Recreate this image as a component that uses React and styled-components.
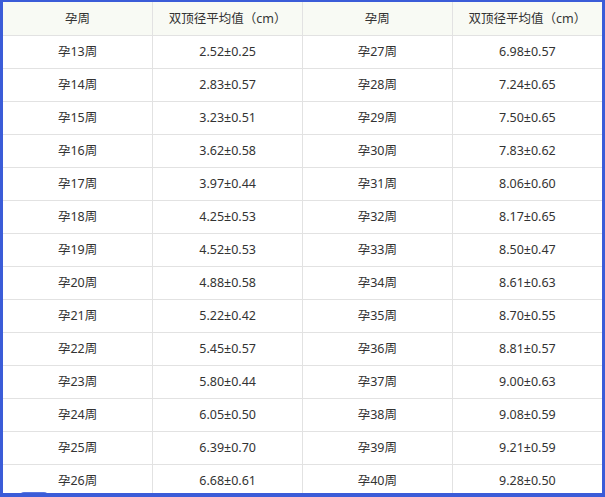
import React from "react";
import styled, { createGlobalStyle } from "styled-components";

const Global = createGlobalStyle`
  html, body { margin: 0; padding: 0; background: #ffffff; }
  * { box-sizing: border-box; }
`;

const Frame = styled.div`
  width: 605px;
  height: 497px;
  overflow: hidden;
  border-style: solid;
  border-color: #3b5cd8;
  border-width: 2px 3px 4px 3px;
  background: #ffffff;
  position: relative;
`;

const Table = styled.table`
  width: 599px;
  border-collapse: collapse;
  table-layout: fixed;
  font-family: "Noto Sans", "Noto Sans CJK SC", sans-serif;
  font-size: 12.5px;
  line-height: 1.2;
  color: #333333;
`;

const HeadCell = styled.th`
  height: 33px;
  padding: 0;
  font-weight: 400;
  text-align: center;
  vertical-align: middle;
  background: #f8faf4;
  border-right: 1px solid #e2e2e2;
  border-bottom: 1px solid #e2e2e2;
  &:last-child { border-right: none; }
`;

const Cell = styled.td`
  height: 33px;
  padding: 0;
  text-align: center;
  vertical-align: middle;
  border-right: 1px solid #e2e2e2;
  border-bottom: 1px solid #e2e2e2;
  &:last-child { border-right: none; }
`;

const Bump = styled.div`
  position: absolute;
  left: 16px;
  bottom: -4px;
  width: 30px;
  height: 5px;
  border-radius: 5px 5px 0 0;
  background: #5a78e0;
`;

const left = [
  ["孕13周", "2.52±0.25"],
  ["孕14周", "2.83±0.57"],
  ["孕15周", "3.23±0.51"],
  ["孕16周", "3.62±0.58"],
  ["孕17周", "3.97±0.44"],
  ["孕18周", "4.25±0.53"],
  ["孕19周", "4.52±0.53"],
  ["孕20周", "4.88±0.58"],
  ["孕21周", "5.22±0.42"],
  ["孕22周", "5.45±0.57"],
  ["孕23周", "5.80±0.44"],
  ["孕24周", "6.05±0.50"],
  ["孕25周", "6.39±0.70"],
  ["孕26周", "6.68±0.61"],
];

const right = [
  ["孕27周", "6.98±0.57"],
  ["孕28周", "7.24±0.65"],
  ["孕29周", "7.50±0.65"],
  ["孕30周", "7.83±0.62"],
  ["孕31周", "8.06±0.60"],
  ["孕32周", "8.17±0.65"],
  ["孕33周", "8.50±0.47"],
  ["孕34周", "8.61±0.63"],
  ["孕35周", "8.70±0.55"],
  ["孕36周", "8.81±0.57"],
  ["孕37周", "9.00±0.63"],
  ["孕38周", "9.08±0.59"],
  ["孕39周", "9.21±0.59"],
  ["孕40周", "9.28±0.50"],
];

export default function App() {
  return (
    <>
      <Global />
      <Frame>
        <Table>
          <thead>
            <tr>
              <HeadCell>孕周</HeadCell>
              <HeadCell>双顶径平均值（cm）</HeadCell>
              <HeadCell>孕周</HeadCell>
              <HeadCell>双顶径平均值（cm）</HeadCell>
            </tr>
          </thead>
          <tbody>
            {left.map((l, i) => (
              <tr key={l[0]}>
                <Cell>{l[0]}</Cell>
                <Cell>{l[1]}</Cell>
                <Cell>{right[i][0]}</Cell>
                <Cell>{right[i][1]}</Cell>
              </tr>
            ))}
          </tbody>
        </Table>
        <Bump />
      </Frame>
    </>
  );
}
